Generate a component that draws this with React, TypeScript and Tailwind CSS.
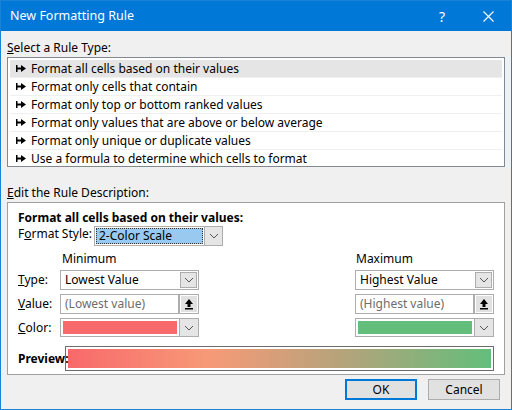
const Chevron = () => (
  <svg width="10" height="6" viewBox="0 0 10 6" fill="none" stroke="#555" strokeWidth="1">
    <path d="M1 1l4 4 4-4" />
  </svg>
);

const Arrow = () => (
  <svg width="10" height="12" viewBox="0 0 10 12" fill="#000">
    <path d="M5 1L1 6h2.5v3h3V6H9z" />
    <rect x="1" y="10" width="8" height="1.5" />
  </svg>
);

const Pointer = () => (
  <svg width="10" height="7" viewBox="0 0 10 7" fill="#000" className="mr-[5px]">
    <rect x="0" y="0" width="1.5" height="7" />
    <path d="M1 2.5h4V0l5 3.5L5 7V4.5H1z" />
  </svg>
);

const Combo = ({ text, w }: { text: string; w: string }) => (
  <div className={`flex h-[20px] ${w} border border-[#adadad] bg-white`}>
    <div className="flex-1 px-[4px] leading-[18px]">{text}</div>
    <div className="m-[1px] flex w-[17px] items-center justify-center border border-[#adadad] bg-[#e5e5e5]">
      <Chevron />
    </div>
  </div>
);

const ValueBox = ({ text }: { text: string }) => (
  <div className="flex h-[20px] w-[139px]">
    <div className="flex-1 border border-[#adadad] bg-white px-[4px] leading-[18px] text-[#6d6d6d]">{text}</div>
    <div className="flex w-[20px] items-center justify-center border border-[#adadad] bg-[#e1e1e1] shadow-[inset_0_0_0_1px_#fff]">
      <Arrow />
    </div>
  </div>
);

const ColorBox = ({ color }: { color: string }) => (
  <div className="flex h-[19px] w-[139px] border border-[#adadad] bg-white">
    <div className="m-[2px] flex-1" style={{ background: color }} />
    <div className="flex w-[19px] items-center justify-center border-l border-[#adadad] bg-[#e5e5e5]">
      <Chevron />
    </div>
  </div>
);

const rules = [
  "Format all cells based on their values",
  "Format only cells that contain",
  "Format only top or bottom ranked values",
  "Format only values that are above or below average",
  "Format only unique or duplicate values",
  "Use a formula to determine which cells to format",
];

export default function App() {
  return (
    <div className="h-[410px] w-[512px] border border-[#1883d7] bg-[#f0f0f0] text-[12px] text-black" style={{ fontFamily: '"Noto Sans", sans-serif' }}>
      <div className="flex h-[30px] items-center bg-[#0078d7] text-white">
        <div className="flex-1 pl-[9px] text-[12.5px]">New Formatting Rule</div>
        <div className="w-[46px] text-center text-[14px]">?</div>
        <div className="flex w-[46px] justify-center">
          <svg width="11" height="11" viewBox="0 0 11 11" stroke="#fff" strokeWidth="1.1">
            <path d="M0.5 0.5l10 10M10.5 0.5l-10 10" />
          </svg>
        </div>
      </div>
      <div className="px-[6px]">
        <div className="mt-[8px] leading-[18px]"><u>S</u>elect a Rule Type:</div>
        <div className="h-[110px] border border-[#828790] bg-white p-[2px]">
          {rules.map((r, i) => (
            <div key={r} className={`flex h-[18px] items-center border-b border-[#f0f0f0] pl-[6px] ${i === 0 ? "bg-[#e5e5e5]" : ""}`}>
              <Pointer />
              {r}
            </div>
          ))}
        </div>
        <div className="mt-[17px] leading-[18px]"><u>E</u>dit the Rule Description:</div>
        <div className="h-[173px] border border-[#a0a0a0] bg-white px-[10px] pt-[7px]">
          <div className="font-bold leading-[16px]">Format all cells based on their values:</div>
          <div className="flex items-start">
            <div className="w-[76px] leading-[16px]">F<u>o</u>rmat Style:</div>
            <div className="flex h-[20px] w-[129px] border border-[#adadad] bg-white">
              <div className="m-[1px] flex-1 border border-dotted border-[#333] bg-[#99c9ef] px-[2px] leading-[14px]">2-Color Scale</div>
              <div className="flex w-[18px] items-center justify-center border-l border-[#adadad] bg-[#e5e5e5]">
                <Chevron />
              </div>
            </div>
          </div>
          <div className="mt-[6px] flex">
            <div className="w-[42px] pt-[16px] leading-[24px]">
              <div><u>T</u>ype:</div>
              <div><u>V</u>alue:</div>
              <div><u>C</u>olor:</div>
            </div>
            <div className="flex flex-col gap-[4px]">
              <div className="pl-[2px] leading-[14px]">Minimum</div>
              <Combo text="Lowest Value" w="w-[139px]" />
              <ValueBox text="(Lowest value)" />
              <ColorBox color="#f8696b" />
            </div>
            <div className="flex-1" />
            <div className="flex flex-col gap-[4px]">
              <div className="pl-[1px] leading-[14px]">Maximum</div>
              <Combo text="Highest Value" w="w-[139px]" />
              <ValueBox text="(Highest value)" />
              <ColorBox color="#63be7b" />
            </div>
          </div>
          <div className="mt-[6px] flex items-center">
            <div className="w-[47px] font-bold">Preview:</div>
            <div className="h-[25px] flex-1 border border-[#6d6d6d] p-[2px]">
              <div className="h-full bg-[linear-gradient(to_right,#f8696b,#f79a77,#b1a47b,#63be7b)]" />
            </div>
          </div>
        </div>
        <div className="mt-[4px] flex justify-end gap-[11px] pr-[5px]">
          <button className="h-[21px] w-[72px] border-2 border-[#0078d7] bg-[#e1e1e1]">OK</button>
          <button className="h-[21px] w-[72px] border border-[#adadad] bg-[#e1e1e1]">Cancel</button>
        </div>
      </div>
    </div>
  );
}
